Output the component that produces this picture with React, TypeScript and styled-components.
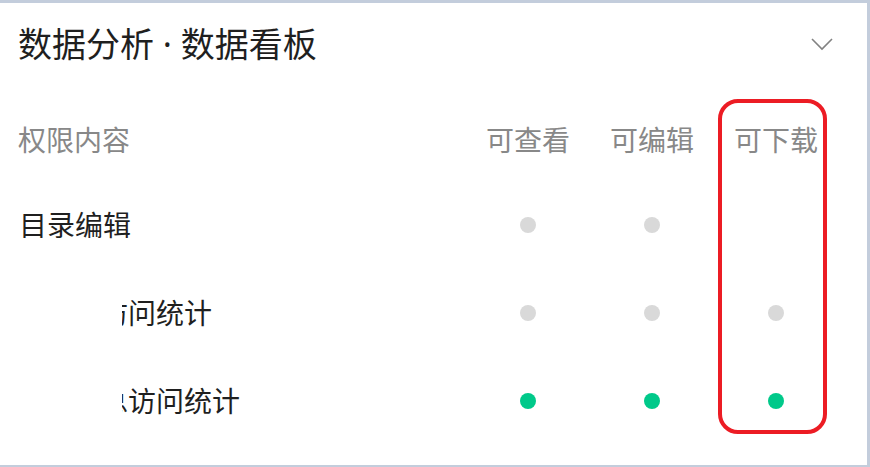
import styled, { createGlobalStyle } from "styled-components";

const GlobalStyle = createGlobalStyle`
  html, body {
    margin: 0;
    padding: 0;
    background: #c3cddc;
    font-family: "Noto Sans", "Noto Sans CJK SC", sans-serif;
  }
`;

const Panel = styled.div`
  position: relative;
  width: 867px;
  height: 462px;
  margin: 3px 0 2px 0;
  background: #fff;
  overflow: hidden;
`;

const Header = styled.header`
  height: 82px;
  display: flex;
  align-items: center;
  justify-content: space-between;
  padding: 0 34px 0 18px;
`;

const Title = styled.h1`
  margin: 0;
  font-size: 34px;
  font-weight: 400;
  line-height: 1;
  color: #1f1f1f;
`;

const Table = styled.div`
  display: grid;
  grid-template-columns: 466px repeat(3, 124px);
`;

const HeadCell = styled.div<{ $first?: boolean }>`
  height: 82px;
  margin-top: 14px;
  display: flex;
  align-items: center;
  justify-content: ${(p) => (p.$first ? "flex-start" : "center")};
  padding-left: ${(p) => (p.$first ? "18px" : "0")};
  font-size: 28px;
  line-height: 1;
  color: #888;
`;

const LabelCell = styled.div`
  height: 88px;
  display: flex;
  align-items: center;
  padding-left: 19px;
  font-size: 28px;
  line-height: 1;
  color: #1f1f1f;
`;

// 子级名称在参考图里左侧被截掉一截
const Clip = styled.div`
  margin-left: 103px;
  overflow: hidden;
  white-space: nowrap;
  span {
    display: inline-block;
    margin-left: -22px;
  }
`;

const DotCell = styled.div`
  height: 88px;
  display: flex;
  align-items: center;
  justify-content: center;
`;

const Dot = styled.span<{ $on: boolean }>`
  width: 16px;
  height: 16px;
  border-radius: 50%;
  background: ${(p) => (p.$on ? "#00c98a" : "#d9d9d9")};
`;

const Highlight = styled.div`
  position: absolute;
  left: 718px;
  top: 96px;
  width: 101px;
  height: 327px;
  border: 4px solid #ec1c24;
  border-radius: 20px;
  pointer-events: none;
`;

type Row = { name: string; sub?: boolean; perms: (boolean | null)[] };

const rows: Row[] = [
  { name: "目录编辑", perms: [false, false, null] },
  { name: "访问统计", sub: true, perms: [false, false, false] },
  { name: "总访问统计", sub: true, perms: [true, true, true] },
];

export default function App() {
  return (
    <>
      <GlobalStyle />
      <Panel>
        <Header>
          <Title>数据分析 · 数据看板</Title>
          <svg width="22" height="13" viewBox="0 0 22 13">
            <path d="M1 1 L11 11 L21 1" fill="none" stroke="#828282" strokeWidth="1.6" />
          </svg>
        </Header>
        <Table>
          <HeadCell $first>权限内容</HeadCell>
          <HeadCell>可查看</HeadCell>
          <HeadCell>可编辑</HeadCell>
          <HeadCell>可下载</HeadCell>
          {rows.map((r) => (
            <>
              <LabelCell key={r.name}>
                {r.sub ? (
                  <Clip>
                    <span>{r.name}</span>
                  </Clip>
                ) : (
                  r.name
                )}
              </LabelCell>
              {r.perms.map((p, i) => (
                <DotCell key={r.name + i}>{p !== null && <Dot $on={p} />}</DotCell>
              ))}
            </>
          ))}
        </Table>
        <Highlight />
      </Panel>
    </>
  );
}
